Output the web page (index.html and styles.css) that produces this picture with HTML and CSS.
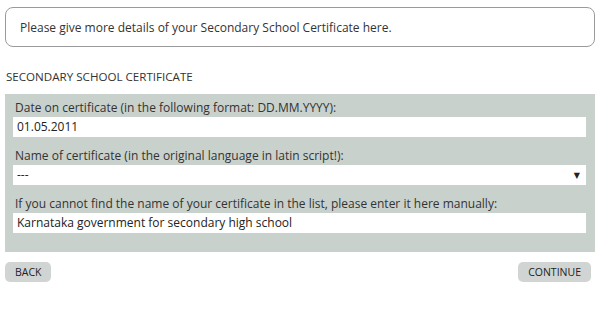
FILE: index.html
```html
<!DOCTYPE html>
<html>
<head>
<meta charset="utf-8">
<link rel="stylesheet" href="styles.css">
</head>
<body>
<div class="page">
  <div class="notice">Please give more details of your Secondary School Certificate here.</div>
  <div class="section-title">SECONDARY SCHOOL CERTIFICATE</div>
  <div class="panel">
    <div class="field">
      <div class="label">Date on certificate (in the following format: DD.MM.YYYY):</div>
      <div class="input">01.05.2011</div>
    </div>
    <div class="field">
      <div class="label">Name of certificate (in the original language in latin script!):</div>
      <div class="input select"><span>---</span><span class="arrow">&#9660;</span></div>
    </div>
    <div class="field">
      <div class="label">If you cannot find the name of your certificate in the list, please enter it here manually:</div>
      <div class="input">Karnataka government for secondary high school</div>
    </div>
  </div>
  <div class="actions">
    <div class="btn">BACK</div>
    <div class="btn">CONTINUE</div>
  </div>
</div>
</body>
</html>
```
FILE: styles.css
```css
html, body {
  margin: 0;
  padding: 0;
  background: #ffffff;
}
body {
  font-family: "Open Sans", "DejaVu Sans", sans-serif;
  color: #333333;
}
.page {
  padding: 7px 5px 0 5px;
}
.notice {
  height: 38px;
  border: 1px solid #9a9a9a;
  border-radius: 8px;
  padding-left: 14px;
  display: flex;
  align-items: center;
  font-size: 12px;
  color: #333;
}
.section-title {
  margin-top: 21px;
  height: 26px;
  padding-left: 1px;
  font-size: 11.6px;
  line-height: 18px;
  color: #333;
}
.panel {
  background: #c9d1cc;
  padding: 4px 9px 19px 8px;
  display: flex;
  flex-direction: column;
  gap: 9px;
}
.field {
  display: flex;
  flex-direction: column;
}
.label {
  font-size: 12px;
  line-height: 19px;
  padding-left: 2px;
  color: #333;
}
.input {
  height: 20px;
  background: #ffffff;
  font-size: 12px;
  line-height: 20px;
  padding-left: 4px;
  color: #222;
}
.select {
  display: flex;
  justify-content: space-between;
  padding-right: 6px;
}
.arrow {
  font-size: 8px;
  color: #222;
}
.actions {
  margin-top: 10px;
  display: flex;
  justify-content: space-between;
  padding-right: 4px;
}
.btn {
  height: 20px;
  line-height: 20px;
  padding: 0 10px;
  background: #d0d4d2;
  border-radius: 5px;
  font-size: 10.5px;
  color: #222;
}
```
